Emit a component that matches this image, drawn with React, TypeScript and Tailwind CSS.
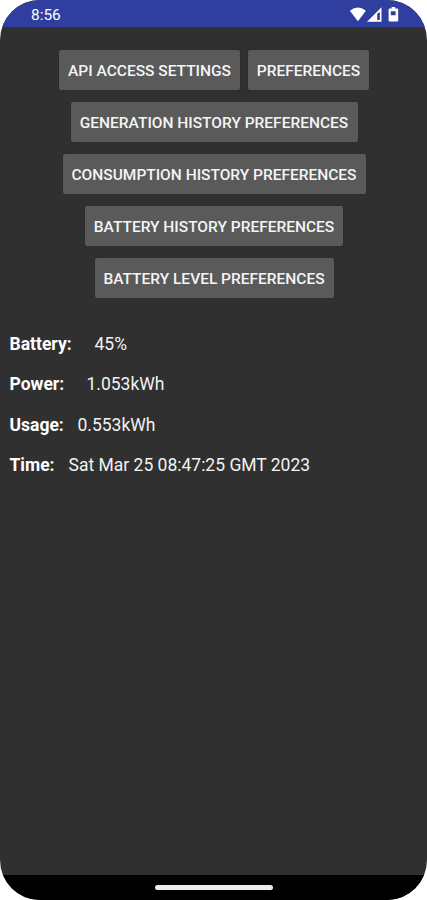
const buttonClass =
  "flex h-10 items-center justify-center whitespace-nowrap rounded-[2px] bg-[#5a5a5b] pt-[3px] text-[15.5px] font-medium text-[#f5f5f5] shadow-[0_0_2px_rgba(0,0,0,0.3)]";

function StatusBar() {
  return (
    <header className="flex h-[26.5px] shrink-0 items-center justify-between bg-[#303f9f] pl-[31px] pr-[28px] text-white">
      <span className="pt-[4px] text-[15.4px] leading-5">8:56</span>
      <svg width="50" height="16" viewBox="0 0 50 16" className="mt-[3px]" fill="currentColor">
        <path d="M.9 3.8Q8.9-3 16.9 3.8L8.9 14.2Z" />
        <path fillRule="evenodd" d="M32.5 .3v14.4H18ZM28.2 6.7v6.4h2.6V4.9Z" />
        <path
          fillRule="evenodd"
          d="M42.6 0h3.6v1.6h2q1 0 1 1v10.9q0 1-1 1h-7.6q-1 0-1-1V2.6q0-1 1-1h2ZM41.8 4.3v4h4.8V4.3Z"
        />
      </svg>
    </header>
  );
}

function Reading({ label, value, gap }: { label: string; value: string; gap: string }) {
  return (
    <div className="flex h-[40.6px] items-center whitespace-nowrap text-[17.5px] text-[#f2f2f2]">
      <span className={`${gap} shrink-0 font-bold text-white`}>{label}</span>
      <span>{value}</span>
    </div>
  );
}

export default function App() {
  return (
    <div className="h-[900px] w-[427px] bg-white font-['Roboto','Liberation_Sans',sans-serif]">
      <div className="flex h-full flex-col overflow-hidden rounded-[40px] bg-[#303030]">
        <StatusBar />
        <main className="flex flex-1 flex-col pt-[23.5px]">
          <div className="flex flex-col items-center gap-3 pl-px">
            <div className="flex gap-2">
              <button className={`${buttonClass} w-[181px]`}>API ACCESS SETTINGS</button>
              <button className={`${buttonClass} w-[121px]`}>PREFERENCES</button>
            </div>
            <button className={`${buttonClass} w-[287px]`}>GENERATION HISTORY PREFERENCES</button>
            <button className={`${buttonClass} w-[303px]`}>CONSUMPTION HISTORY PREFERENCES</button>
            <button className={`${buttonClass} w-[258px]`}>BATTERY HISTORY PREFERENCES</button>
            <button className={`${buttonClass} w-[239px]`}>BATTERY LEVEL PREFERENCES</button>
          </div>
          <div className="mt-[25.5px] pl-[9.5px]">
            <Reading label="Battery:" value="45%" gap="w-[85px]" />
            <Reading label="Power:" value="1.053kWh" gap="w-[77px]" />
            <Reading label="Usage:" value="0.553kWh" gap="w-[68px]" />
            <Reading label="Time:" value="Sat Mar 25 08:47:25 GMT 2023" gap="w-[59px]" />
          </div>
        </main>
        <footer className="flex h-[25.5px] shrink-0 items-center justify-center bg-black">
          <div className="h-[5px] w-[118px] rounded-full bg-[#ececec]" />
        </footer>
      </div>
    </div>
  );
}
